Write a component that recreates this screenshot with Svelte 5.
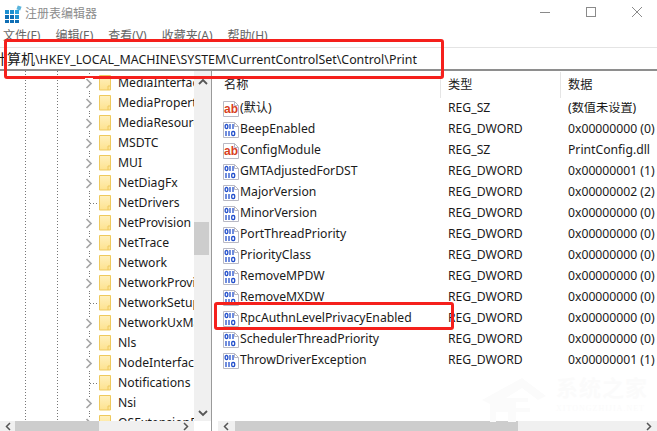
<script>
  const menus = ['文件(F)', '编辑(E)', '查看(V)', '收藏夹(A)', '帮助(H)'];
  const tree = [
    ['MediaInterfaces', true], ['MediaProperties', true], ['MediaResources', true], ['MSDTC', true], ['MUI', true],
    ['NetDiagFx', true], ['NetDrivers', false], ['NetProvision', true], ['NetTrace', true], ['Network', true],
    ['NetworkProvider', true], ['NetworkSetup2', false], ['NetworkUxManager', true], ['Nls', true], ['NodeInterfaces', true],
    ['Notifications', false], ['Nsi', true], ['OSExtensionDatabase', true]
  ];
  const rows = [
    ['ab', '(默认)', 'REG_SZ', '(数值未设置)'],
    ['bin', 'BeepEnabled', 'REG_DWORD', '0x00000000 (0)'],
    ['ab', 'ConfigModule', 'REG_SZ', 'PrintConfig.dll'],
    ['bin', 'GMTAdjustedForDST', 'REG_DWORD', '0x00000001 (1)'],
    ['bin', 'MajorVersion', 'REG_DWORD', '0x00000002 (2)'],
    ['bin', 'MinorVersion', 'REG_DWORD', '0x00000000 (0)'],
    ['bin', 'PortThreadPriority', 'REG_DWORD', '0x00000000 (0)'],
    ['bin', 'PriorityClass', 'REG_DWORD', '0x00000000 (0)'],
    ['bin', 'RemoveMPDW', 'REG_DWORD', '0x00000000 (0)'],
    ['bin', 'RemoveMXDW', 'REG_DWORD', '0x00000000 (0)'],
    ['bin', 'RpcAuthnLevelPrivacyEnabled', 'REG_DWORD', '0x00000000 (0)'],
    ['bin', 'SchedulerThreadPriority', 'REG_DWORD', '0x00000000 (0)'],
    ['bin', 'ThrowDriverException', 'REG_DWORD', '0x00000001 (1)']
  ];
</script>

<div class="win">
  <header class="title">
    <svg class="logo" width="18" height="18" viewBox="0 0 18 18">
      <g fill="#1c8fd0">
        <rect x="1" y="5" width="4" height="4"/><rect x="6" y="5" width="4" height="4"/><rect x="11" y="5" width="4" height="4" fill="#2aa3dd"/>
        <rect x="1" y="10" width="4" height="4" fill="#0f6fb5"/><rect x="6" y="10" width="4" height="4" fill="#0f6fb5"/><rect x="11" y="10" width="4" height="4"/>
        <rect x="1" y="15" width="4" height="3" fill="#0f6fb5"/><rect x="6" y="15" width="4" height="3" fill="#0f6fb5"/><rect x="11" y="15" width="4" height="3" fill="#0f6fb5"/>
      </g>
      <rect x="13" y="1" width="4" height="4" fill="#5ab4dc" transform="rotate(20 15 3)"/>
    </svg>
    <span class="title-text">注册表编辑器</span>
    <div class="controls">
      <svg width="12" height="12" viewBox="0 0 12 12"><path d="M1 6.5h10" stroke="#8a8a8a"/></svg>
      <svg width="12" height="12" viewBox="0 0 12 12"><rect x="1.5" y="1.5" width="9" height="9" fill="none" stroke="#8a8a8a"/></svg>
      <svg width="12" height="12" viewBox="0 0 12 12"><path d="M1 1l10 10M11 1L1 11" stroke="#8a8a8a" fill="none"/></svg>
    </div>
  </header>

  <nav class="menu">
    {#each menus as m}<span>{m}</span>{/each}
  </nav>

  <div class="address"><span class="path"><span class="cjk">计算机</span>\HKEY_LOCAL_MACHINE\SYSTEM\CurrentControlSet\Control\Print</span></div>

  <main class="panes">
    <section class="left">
      <div class="left-top">
        <div class="tree">
          {#each tree as [name, kids]}
            <div class="node">
              <span class="twisty">
                {#if kids}
                  <svg width="8" height="11" viewBox="0 0 8 11"><path d="M1.5 1l4.5 4.5L1.5 10" fill="none" stroke="#a6a6a6" stroke-width="1.7"/></svg>
                {:else}
                  <i class="tick"></i>
                {/if}
              </span>
              <svg class="folder" width="12" height="16" viewBox="0 0 12 16">
                <defs>
                  <linearGradient id="fg" x1="0" y1="0" x2="0" y2="1"><stop offset="0" stop-color="#fff0bd"/><stop offset="1" stop-color="#fde28f"/></linearGradient>
                </defs>
                <path d="M.5.5h11v14.500H.5z" fill="url(#fg)" stroke="#eec95e"/>
                <path d="M9 11v4M9 11h2.500" fill="none" stroke="#eec95e"/>
              </svg>
              <span class="node-label">{name}</span>
            </div>
          {/each}
        </div>
        <div class="vbar">
          <svg width="10" height="7" viewBox="0 0 10 7"><path d="M1 6l4-4 4 4" fill="none" stroke="#555" stroke-width="1.800"/></svg>
          <div class="vthumb"></div>
          <svg width="10" height="7" viewBox="0 0 10 7"><path d="M1 1l4 4 4-4" fill="none" stroke="#555" stroke-width="1.800"/></svg>
        </div>
      </div>
      <div class="hbar tree-hbar">
        <svg width="6" height="9" viewBox="0 0 6 9"><path d="M5 1L1.500 4.500 5 8" fill="none" stroke="#555" stroke-width="1.500"/></svg>
        <div class="hthumb tree-thumb"></div>
        <svg class="end" width="6" height="9" viewBox="0 0 6 9"><path d="M1 1l3.500 3.500L1 8" fill="none" stroke="#555" stroke-width="1.500"/></svg>
      </div>
    </section>

    <section class="right">
      <div class="list">
        <div class="row head">
          <div class="c1 plain">名称</div><div class="c2">类型</div><div class="c3">数据</div>
        </div>
        {#each rows as [kind, name, type, data]}
          <div class="row">
            <div class="c1">
              {#if kind === 'ab'}
                <svg class="icon" width="16" height="16" viewBox="0 0 16 16">
                  <path d="M.5.5h11l4 4v11H.5z" fill="#fff" stroke="#b9b9c4"/>
                  <path d="M11.500.5v4h4" fill="none" stroke="#b9b9c4"/>
                  <path d="M2 6h11v6H2z" fill="#fff"/>
                </svg>
                <span class="ab">ab</span>
              {:else}
                <svg class="icon" width="16" height="16" viewBox="0 0 16 16">
                  <path d="M.5.5h11l4 4v11H.5z" fill="#fff" stroke="#b9b9c4"/>
                  <path d="M11.500.5v4h4" fill="none" stroke="#b9b9c4"/>
                  <g fill="none" stroke="#2450cc" stroke-width="1.300">
                    <rect x="2.200" y="2.500" width="2.600" height="4" rx="1.200"/>
                    <path d="M7 2v5M10 2v5"/>
                    <path d="M3 9v5M6 9v5"/>
                    <rect x="8.700" y="9.500" width="3" height="4" rx="1.200"/>
                  </g>
                </svg>
              {/if}
              <span class="label">{name}</span>
            </div>
            <div class="c2">{type}</div>
            <div class="c3">{data}</div>
          </div>
        {/each}
      </div>
      <div class="hbar list-hbar">
        <svg width="6" height="9" viewBox="0 0 6 9"><path d="M5 1L1.500 4.500 5 8" fill="none" stroke="#555" stroke-width="1.500"/></svg>
        <div class="hthumb list-thumb"></div>
        <svg class="end" width="6" height="9" viewBox="0 0 6 9"><path d="M1 1l3.500 3.500L1 8" fill="none" stroke="#555" stroke-width="1.500"/></svg>
      </div>
    </section>
  </main>

  <div class="mark">
    <svg width="72" height="50" viewBox="0 0 72 50"><path d="M0 24L40 2l24 18-8 4-16-12-16 10h22v4H34v6h14v4H34v10h-8V36H14v10H8V28z" fill="#fbfbfb"/></svg>
    <div class="mark-text"><b>系统之家</b><small>XITONGZHIJIA.NET</small></div>
  </div>

  <div class="redbox one"></div>
  <div class="redbox two"></div>
</div>

<style>
  :global(body) { margin: 0; background: #fff; }
  .win {
    position: relative; width: 657px; height: 431px; overflow: hidden; background: #fff; color: #1a1a1a;
    display: flex; flex-direction: column;
    font: 12.2px/1 "Noto Sans", "Noto Sans CJK SC", sans-serif;
  }
  .title { height: 27px; flex: none; display: flex; align-items: center; padding-left: 4px; }
  .logo { margin-right: 3px; }
  .title-text { color: #8c8c8c; font-size: 12px; }
  .controls { margin-left: auto; display: flex; gap: 34px; padding-right: 14px; align-items: center; margin-top: -3px; }
  .menu { height: 20px; flex: none; box-sizing: border-box; padding: 3px 0 0 3px; display: flex; gap: 15px; align-items: flex-start; font-size: 12px; color: #666; }
  .address {
    height: 24px; flex: none; box-sizing: border-box; border-top: 1px solid #e4e4e4; border-bottom: 2px solid #8e8e8e;
    padding-top: 1px; display: flex; align-items: center; overflow: hidden; font-size: 12.4px; white-space: nowrap;
  }
  .path { margin-left: -7px; }
  .cjk { font-size: 14px; }
  .panes { flex: 1; min-height: 0; display: flex; }
  .left { width: 211px; flex: none; display: flex; flex-direction: column; border-right: 1px solid #9a9a9a; box-sizing: content-box; }
  .left-top { flex: 1; min-height: 0; display: flex; }
  .tree {
    width: 194px; flex: none; overflow: hidden; padding-top: 2px;
    background-image:
      repeating-linear-gradient(#777 0 1px, transparent 1px 3px),
      repeating-linear-gradient(#777 0 1px, transparent 1px 3px);
    background-size: 1px 100%, 1px 100%;
    background-position: 25px 0, 57px 0;
    background-repeat: no-repeat;
  }
  .node { height: 20px; display: flex; align-items: center; padding-left: 85px; white-space: nowrap; position: relative; }
  .node::before {
    content: ""; position: absolute; left: 89px; top: 0; bottom: 0; width: 1px;
    background: repeating-linear-gradient(#777 0 1px, transparent 1px 3px);
  }
  .twisty { width: 14px; height: 11px; flex: none; display: flex; align-items: center; position: relative; z-index: 1; }
  .twisty svg { background: #fff; }
  .tick { display: block; width: 8px; height: 1px; margin-left: 5px; background: repeating-linear-gradient(90deg, #777 0 1px, transparent 1px 3px); }
  .folder { flex: none; margin-right: 7px; }
  .node-label { display: block; }
  .vbar {
    width: 17px; flex: none; background: #f0f0f0; display: flex; flex-direction: column; align-items: center;
    padding: 7px 0 4px; box-sizing: border-box;
  }
  .vbar > svg:last-child { margin-top: auto; }
  .vthumb { width: 15px; height: 33px; background: #cdcdcd; margin-top: 137px; margin-right: 2px; }
  .hbar { height: 10px; flex: none; background: #f0f0f0; display: flex; align-items: center; }
  .hbar svg { flex: none; margin-left: 5px; }
  .hbar .end { margin-left: auto; margin-right: 5px; }
  .tree-hbar { width: 194px; }
  .tree-thumb { width: 84px; height: 100%; background: #cdcdcd; margin-left: 4px; }
  .right { flex: 1; min-width: 0; display: flex; flex-direction: column; margin-left: 6px; }
  .list { flex: 1; min-height: 0; overflow: hidden; padding-top: 1px; }
  .row { display: flex; height: 21px; align-items: center; white-space: nowrap; }
  .head { height: 26px; }
  .head > div { height: 100%; display: flex; align-items: center; border-right: 1px solid #e5e5e5; }
  .head .c3 { border: 0; }
  .c1 { width: 223px; flex: none; display: flex; align-items: center; overflow: hidden; padding-left: 5px; box-sizing: border-box; position: relative; }
  .c1.plain { padding-left: 6px; }
  .c2 { width: 120px; flex: none; box-sizing: border-box; padding-left: 7px; }
  .c3 { flex: 1; padding-left: 7px; overflow: hidden; }
  .icon { flex: none; margin-right: 1px; }
  .ab {
    position: absolute; left: 6px; top: 50%; transform: translateY(-50%); width: 14px; text-align: center;
    color: #d8401f; font: 700 12px/1 "Liberation Sans", sans-serif;
  }
  .list-thumb { width: 283px; height: 100%; background: #cdcdcd; margin-left: 6px; }
  .mark { position: absolute; left: 482px; top: 376px; display: flex; color: #fbfbfb; }
  .mark-text { display: flex; flex-direction: column; margin-left: 2px; }
  .mark-text b { font-size: 22px; letter-spacing: 1px; font-weight: 700; }
  .mark-text small { font: 8px/1 "Liberation Serif", serif; letter-spacing: 1px; margin-top: 7px; white-space: nowrap; }
  .redbox { position: absolute; border: 3px solid #f5201c; border-radius: 3px; box-sizing: border-box; pointer-events: none; }
  .one { left: 4px; top: 39px; width: 440px; height: 40px; }
  .two { left: 214px; top: 302px; width: 240px; height: 28px; }
</style>
